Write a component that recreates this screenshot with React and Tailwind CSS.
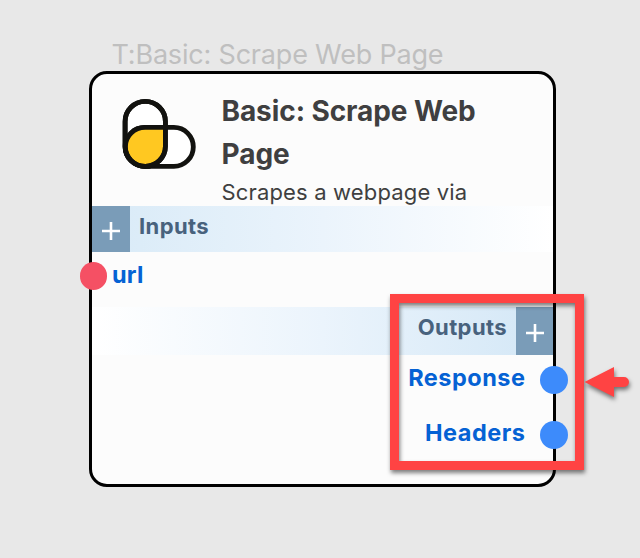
function Plus() {
  return (
    <svg className="block h-[18px] w-[18px]" viewBox="0 0 18 18" fill="none" stroke="#fff" strokeWidth="2.6">
      <path d="M0 9H18M9 0V18" />
    </svg>
  );
}

function Logo() {
  return (
    <svg className="mt-[23px] ml-[27px] h-[74px] w-[78px] shrink-0" viewBox="119 97 78 74" fill="none" stroke="#12120f" strokeWidth="4.8">
      <rect x="125.1" y="101.4" width="40.3" height="64.9" rx="20.1" fill="#fff" />
      <rect x="125.1" y="127.4" width="68.2" height="38.9" rx="19.4" fill="#fff" />
      <path d="M165.4 127.4H145.2A19.8 19.4 0 0 0 145.2 166.3A20.1 20.1 0 0 0 165.4 146.2Z" fill="#ffc821" />
      <path d="M145.2 101.4A20.1 20.1 0 0 1 165.4 121.5V146.2A20.1 20.1 0 0 1 145.2 166.3A20.1 20.1 0 0 1 125.1 146.2V121.5A20.1 20.1 0 0 1 145.2 101.4Z" />
    </svg>
  );
}

function Port({ label }) {
  return (
    <div className="flex h-[56px] items-center justify-end">
      <span className="mr-[14.5px] mb-[5px] text-[23.5px] leading-[30px] font-bold tracking-[0.5px] text-[#0562d4]">{label}</span>
      <span className="mr-[-15px] mb-px h-[28px] w-[28px] rounded-full bg-[#3d8bfb]" />
    </div>
  );
}

export default function App() {
  return (
    <div className="relative h-[558px] w-[640px] overflow-hidden bg-[#e8e8e8] font-['Inter',sans-serif] [font-optical-sizing:none]">
      <div className="h-[71px] pt-[38px] pl-[111.5px] text-[27px] leading-[34px] font-normal tracking-[-0.19px] whitespace-nowrap text-[#bfbfbf]">
        <span>T:Basic: Scrape Web Page</span>
      </div>
      <main className="ml-[89px] h-[416px] w-[467px] rounded-[18px] border-[3px] border-black bg-[#fcfcfc]">
        <header className="flex h-[132px]">
          <Logo />
          <div className="mt-[16px] ml-[24.5px] text-[#3f3f40]">
            <h1 className="w-[280px] text-[28px] leading-[43px] font-bold tracking-[-0.08px]">Basic: Scrape Web Page</h1>
            <p className="-mt-px text-[22px] leading-[34px] font-normal tracking-[0.16px]">Scrapes a webpage via</p>
          </div>
        </header>
        <div className="flex h-[46px] bg-linear-to-r from-[#d8eaf7] via-[#ebf4fc] to-white">
          <button className="flex w-[38px] items-center justify-center bg-[#7a9cb8] pt-[3px]"><Plus /></button>
          <span className="ml-[9px] pt-[6px] text-[22px] leading-[28px] font-bold tracking-[0.4px] text-[#48627d]">Inputs</span>
        </div>
        <div className="flex h-[55px]">
          <span className="mt-[10px] ml-[-12px] h-[28px] w-[27px] rounded-full bg-[#f55064]" />
          <span className="ml-[5px] pt-[8px] text-[23.5px] leading-[30px] font-bold tracking-[0.2px] text-[#0562d4]">url</span>
        </div>
        <div className="flex h-[48px] justify-end bg-linear-to-r from-white via-[#ebf4fc] to-[#d3e7f6]">
          <span className="mr-[9px] pt-[6px] text-[22px] leading-[28px] font-bold tracking-[0.4px] text-[#48627d]">Outputs</span>
          <button className="flex w-[37px] items-center justify-center bg-[#7a9cb8] pt-[4px]"><Plus /></button>
        </div>
        <div className="-mt-[3px] flex flex-col -space-y-px">
          <Port label="Response" />
          <Port label="Headers" />
        </div>
      </main>
      <div className="absolute top-[294px] left-[390px] h-[176px] w-[194px] border-[9px] border-[#ff4343] drop-shadow-[1px_3px_2px_rgba(0,0,0,0.5)]" />
      <svg className="absolute top-[360px] left-[580px] h-[44px] w-[60px] drop-shadow-[1px_3px_2px_rgba(0,0,0,0.5)]" viewBox="580 360 60 44" fill="#ff4343">
        <path d="M584.5 382L614 367V377H624A5 5 0 0 1 624 387H614V397Z" />
      </svg>
    </div>
  );
}
